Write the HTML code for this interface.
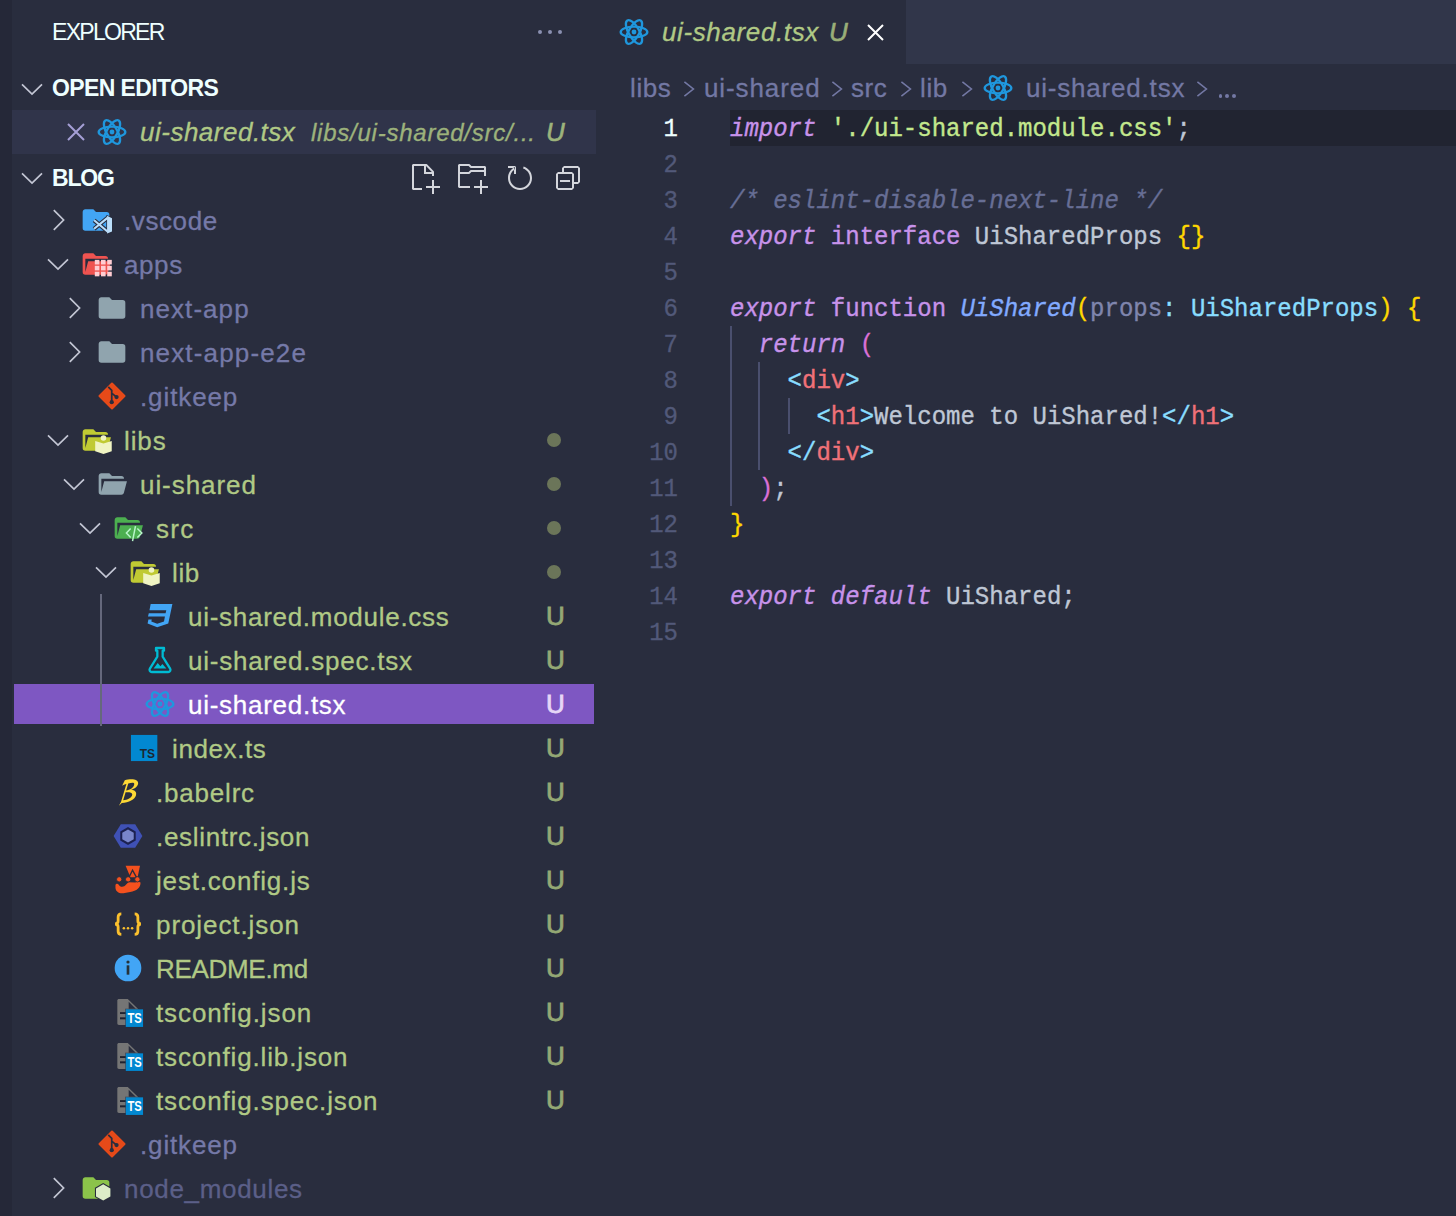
<!DOCTYPE html>
<html><head><meta charset="utf-8">
<style>
html,body{margin:0;padding:0;background:#292D3E;}
body{width:1456px;height:1216px;overflow:hidden;position:relative;background:#292D3E;font-family:"Liberation Sans",sans-serif;}
.ic{position:absolute;overflow:visible;}
.t{position:absolute;height:44px;line-height:44px;font-size:26px;white-space:pre;letter-spacing:0.6px;-webkit-text-stroke:0.3px currentColor;}
.u{position:absolute;height:44px;line-height:44px;font-size:26px;font-weight:normal;-webkit-text-stroke:0.8px currentColor;}
.ln{position:absolute;left:600px;width:78px;text-align:right;height:36px;line-height:36px;font-family:"Liberation Mono",monospace;font-size:24px;color:#525979;transform:scaleY(1.08);transform-origin:0 0;-webkit-text-stroke:0.3px currentColor;}
.ln.act{color:#eeffff;}
.cl{position:absolute;left:730px;height:36px;line-height:36px;font-family:"Liberation Mono",monospace;font-size:24px;white-space:pre;color:#bfc7d5;transform:scaleY(1.08);transform-origin:0 0;-webkit-text-stroke:0.35px currentColor;}
.i{font-style:italic;}
.kw{color:#c792ea;}
.str{color:#c3e88d;}
.pl{color:#bfc7d5;}
.cm{color:#676e95;font-style:italic;}
.fn{color:#82aaff;font-style:italic;}
.prm{color:#7f85ad;}
.op{color:#89ddff;}
.ty{color:#89ddff;}
.tag{color:#f07178;}
.b1{color:#ffd700;}
.b2{color:#da70d6;}
</style></head><body>
<div style="position:absolute;left:0;top:0;width:12px;height:1216px;background:#252838"></div>
<div style="position:absolute;left:52px;top:10px;height:44px;line-height:44px;font-size:23px;color:#eeffff;letter-spacing:-1.7px">EXPLORER</div>
<div style="position:absolute;left:538px;top:30px;width:4px;height:4px;border-radius:2px;background:#8a8fb0"></div>
<div style="position:absolute;left:548px;top:30px;width:4px;height:4px;border-radius:2px;background:#8a8fb0"></div>
<div style="position:absolute;left:558px;top:30px;width:4px;height:4px;border-radius:2px;background:#8a8fb0"></div>
<svg class="ic" style="left:21px;top:82px" width="22" height="14" viewBox="0 0 22 14"><path d="M1 2.4 L11 12 L21 2.4" fill="none" stroke="#c3c6d4" stroke-width="1.7"/></svg>
<div style="position:absolute;left:52px;top:66px;height:44px;line-height:44px;font-size:23px;font-weight:bold;color:#eeffff;letter-spacing:-0.6px">OPEN EDITORS</div>
<div style="position:absolute;left:14px;top:684px;width:580px;height:40px;background:#7e57c2"></div>
<div style="position:absolute;left:12px;top:110px;width:584px;height:44px;background:#30344a"></div>
<div style="position:absolute;left:100px;top:594px;width:2px;height:132px;background:#65687c"></div>
<svg class="ic" style="left:52px;top:209px" width="14" height="22" viewBox="0 0 14 22"><path d="M1.8 1.2 L11.6 11 L1.8 20.8" fill="none" stroke="#c3c6d4" stroke-width="1.7"/></svg>
<svg class="ic" style="left:80px;top:204px" width="32" height="32" viewBox="0 0 24 24"><path d="M10 4H4c-1.11 0-2 .89-2 2v12a2 2 0 0 0 2 2h16a2 2 0 0 0 2-2V8a2 2 0 0 0-2-2h-8l-2-2z" fill="#42a5f5"/><g stroke="#292D3E" stroke-width="1.2" stroke-linejoin="round"><path d="M10.6 12.2 L20.6 20.6 M10.6 18.6 L20.6 10.4" stroke-width="3.2"/><path d="M20.3 8.9 L24 10.6 V20.6 L20.3 22.2 Z" fill="#292D3E"/></g><path d="M10.6 12.2 L20.6 20.6 M10.6 18.6 L20.6 10.4" stroke="#bbdefb" stroke-width="1.6" fill="none"/><path d="M20.3 8.9 L24 10.6 V20.6 L20.3 22.2 Z" fill="#bbdefb"/></svg>
<div class="t" style="left:124px;top:199px;color:#7579a8;letter-spacing:0.60px">.vscode</div>
<svg class="ic" style="left:47px;top:257px" width="22" height="14" viewBox="0 0 22 14"><path d="M1 2.4 L11 12 L21 2.4" fill="none" stroke="#c3c6d4" stroke-width="1.7"/></svg>
<svg class="ic" style="left:80px;top:248px" width="32" height="32" viewBox="0 0 24 24"><path d="M19 20H4a2 2 0 0 1-2-2V6c0-1.11.89-2 2-2h6l2 2h7a2 2 0 0 1 2 2H4v10l2.14-8h17.07l-2.28 8.5c-.23.87-1.01 1.5-1.93 1.5z" fill="#ef5350"/><rect x="11.10" y="8.90" width="3.45" height="3.45" fill="#ffcdd2"/><rect x="11.10" y="13.35" width="3.45" height="3.45" fill="#ffcdd2"/><rect x="11.10" y="17.80" width="3.45" height="3.45" fill="#ffcdd2"/><rect x="15.75" y="8.90" width="3.45" height="3.45" fill="#ffcdd2"/><rect x="15.75" y="13.35" width="3.45" height="3.45" fill="#ffcdd2"/><rect x="15.75" y="17.80" width="3.45" height="3.45" fill="#ffcdd2"/><rect x="20.40" y="8.90" width="3.45" height="3.45" fill="#ffcdd2"/><rect x="20.40" y="13.35" width="3.45" height="3.45" fill="#ffcdd2"/><rect x="20.40" y="17.80" width="3.45" height="3.45" fill="#ffcdd2"/></svg>
<div class="t" style="left:124px;top:243px;color:#7579a8;letter-spacing:0.60px">apps</div>
<svg class="ic" style="left:68px;top:297px" width="14" height="22" viewBox="0 0 14 22"><path d="M1.8 1.2 L11.6 11 L1.8 20.8" fill="none" stroke="#c3c6d4" stroke-width="1.7"/></svg>
<svg class="ic" style="left:96px;top:292px" width="32" height="32" viewBox="0 0 24 24"><path d="M10 4H4c-1.11 0-2 .89-2 2v12a2 2 0 0 0 2 2h16a2 2 0 0 0 2-2V8a2 2 0 0 0-2-2h-8l-2-2z" fill="#90a4ae"/></svg>
<div class="t" style="left:140px;top:287px;color:#7579a8;letter-spacing:1.06px">next-app</div>
<svg class="ic" style="left:68px;top:341px" width="14" height="22" viewBox="0 0 14 22"><path d="M1.8 1.2 L11.6 11 L1.8 20.8" fill="none" stroke="#c3c6d4" stroke-width="1.7"/></svg>
<svg class="ic" style="left:96px;top:336px" width="32" height="32" viewBox="0 0 24 24"><path d="M10 4H4c-1.11 0-2 .89-2 2v12a2 2 0 0 0 2 2h16a2 2 0 0 0 2-2V8a2 2 0 0 0-2-2h-8l-2-2z" fill="#90a4ae"/></svg>
<div class="t" style="left:140px;top:331px;color:#7579a8;letter-spacing:1.15px">next-app-e2e</div>
<svg class="ic" style="left:96px;top:380px" width="32" height="32" viewBox="0 0 24 24"><path d="M2.6 12 L12 2.6 L21.4 12 L12 21.4 Z" fill="#e64a19" stroke="#e64a19" stroke-width="1.5" stroke-linejoin="round"/><path d="M9.2 5.2 L11.8 7.8 V16.2 M11.8 9.8 L15.2 12.6" stroke="#292D3E" stroke-width="1.3" fill="none"/><circle cx="11.8" cy="16.6" r="1.6" fill="#292D3E"/><circle cx="15.4" cy="12.8" r="1.6" fill="#292D3E"/></svg>
<div class="t" style="left:140px;top:375px;color:#7579a8;letter-spacing:0.89px">.gitkeep</div>
<svg class="ic" style="left:47px;top:433px" width="22" height="14" viewBox="0 0 22 14"><path d="M1 2.4 L11 12 L21 2.4" fill="none" stroke="#c3c6d4" stroke-width="1.7"/></svg>
<svg class="ic" style="left:80px;top:424px" width="32" height="32" viewBox="0 0 24 24"><path d="M19 20H4a2 2 0 0 1-2-2V6c0-1.11.89-2 2-2h6l2 2h7a2 2 0 0 1 2 2H4v10l2.14-8h17.07l-2.28 8.5c-.23.87-1.01 1.5-1.93 1.5z" fill="#c0ca33"/><path d="M11.4 12.7 L17.6 14.6 L23.8 12.7 V20.4 L17.6 22.5 L11.4 20.4 Z" fill="#f0f4c3"/><circle cx="17.6" cy="10.5" r="2.1" fill="#f0f4c3"/></svg>
<div class="t" style="left:124px;top:419px;color:#b0c985;letter-spacing:0.90px">libs</div>
<div style="position:absolute;left:547px;top:433px;width:14px;height:14px;border-radius:7px;background:#6b7559"></div>
<svg class="ic" style="left:63px;top:477px" width="22" height="14" viewBox="0 0 22 14"><path d="M1 2.4 L11 12 L21 2.4" fill="none" stroke="#c3c6d4" stroke-width="1.7"/></svg>
<svg class="ic" style="left:96px;top:468px" width="32" height="32" viewBox="0 0 24 24"><path d="M19 20H4a2 2 0 0 1-2-2V6c0-1.11.89-2 2-2h6l2 2h7a2 2 0 0 1 2 2H4v10l2.14-8h17.07l-2.28 8.5c-.23.87-1.01 1.5-1.93 1.5z" fill="#90a4ae"/></svg>
<div class="t" style="left:140px;top:463px;color:#b0c985;letter-spacing:0.94px">ui-shared</div>
<div style="position:absolute;left:547px;top:477px;width:14px;height:14px;border-radius:7px;background:#6b7559"></div>
<svg class="ic" style="left:79px;top:521px" width="22" height="14" viewBox="0 0 22 14"><path d="M1 2.4 L11 12 L21 2.4" fill="none" stroke="#c3c6d4" stroke-width="1.7"/></svg>
<svg class="ic" style="left:112px;top:512px" width="32" height="32" viewBox="0 0 24 24"><path d="M19 20H4a2 2 0 0 1-2-2V6c0-1.11.89-2 2-2h6l2 2h7a2 2 0 0 1 2 2H4v10l2.14-8h17.07l-2.28 8.5c-.23.87-1.01 1.5-1.93 1.5z" fill="#4caf50"/><path d="M14 12.4 L10.8 15.8 L14 19.2 M19 12.4 L22.4 15.8 L19 19.2 M17.6 10.6 L15.4 21.8" fill="none" stroke="#b9f6ca" stroke-width="1.1"/></svg>
<div class="t" style="left:156px;top:507px;color:#b0c985;letter-spacing:1.25px">src</div>
<div style="position:absolute;left:547px;top:521px;width:14px;height:14px;border-radius:7px;background:#6b7559"></div>
<svg class="ic" style="left:95px;top:565px" width="22" height="14" viewBox="0 0 22 14"><path d="M1 2.4 L11 12 L21 2.4" fill="none" stroke="#c3c6d4" stroke-width="1.7"/></svg>
<svg class="ic" style="left:128px;top:556px" width="32" height="32" viewBox="0 0 24 24"><path d="M19 20H4a2 2 0 0 1-2-2V6c0-1.11.89-2 2-2h6l2 2h7a2 2 0 0 1 2 2H4v10l2.14-8h17.07l-2.28 8.5c-.23.87-1.01 1.5-1.93 1.5z" fill="#c0ca33"/><path d="M11.4 12.7 L17.6 14.6 L23.8 12.7 V20.4 L17.6 22.5 L11.4 20.4 Z" fill="#f0f4c3"/><circle cx="17.6" cy="10.5" r="2.1" fill="#f0f4c3"/></svg>
<div class="t" style="left:172px;top:551px;color:#b0c985;letter-spacing:0.60px">lib</div>
<div style="position:absolute;left:547px;top:565px;width:14px;height:14px;border-radius:7px;background:#6b7559"></div>
<svg class="ic" style="left:144px;top:600px" width="32" height="32" viewBox="0 0 24 24"><path d="M5 3 L4.1 7.6 H16.7 L16.2 10 H3.6 L3 12.4 H15.7 L15 16.1 L9.9 17.8 L5.5 16.1 L5.8 14.6 H3.3 L2.7 17.6 L9.9 20.4 L18.2 17.6 L21.3 3 Z" fill="#42a5f5"/></svg>
<div class="t" style="left:188px;top:595px;color:#b0c985;letter-spacing:0.72px">ui-shared.module.css</div>
<div class="u" style="left:546px;top:594px;color:#94a874">U</div>
<svg class="ic" style="left:144px;top:644px" width="32" height="32" viewBox="0 0 24 24"><path d="M9 3 H15 V5 H14 V9.5 L19.6 18.5 C20.3 19.7 19.5 21 18.1 21 H5.9 C4.5 21 3.7 19.7 4.4 18.5 L10 9.5 V5 H9 Z" fill="none" stroke="#00bcd4" stroke-width="1.7" stroke-linejoin="round"/><path d="M7.2 18.4 L10.3 14.2 L12.3 16.6 L13.8 15 L16.8 18.4 Z" fill="#00bcd4"/></svg>
<div class="t" style="left:188px;top:639px;color:#b0c985;letter-spacing:0.76px">ui-shared.spec.tsx</div>
<div class="u" style="left:546px;top:638px;color:#94a874">U</div>
<svg class="ic" style="left:144px;top:688px" width="32" height="32" viewBox="0 0 24 24"><g fill="none" stroke="#1f97dd" stroke-width="1.75"><ellipse cx="12" cy="12" rx="10" ry="4"/><ellipse cx="12" cy="12" rx="10" ry="4" transform="rotate(60 12 12)"/><ellipse cx="12" cy="12" rx="10" ry="4" transform="rotate(120 12 12)"/></g><circle cx="12" cy="12" r="1.8" fill="#1f97dd"/></svg>
<div class="t" style="left:188px;top:683px;color:#ffffff;letter-spacing:0.73px">ui-shared.tsx</div>
<div class="u" style="left:546px;top:682px;color:#e6d6f6">U</div>
<svg class="ic" style="left:128px;top:732px" width="32" height="32" viewBox="0 0 24 24"><rect x="2.2" y="2.2" width="19.8" height="19.6" fill="#0288d1"/><text x="14.6" y="19.6" font-family="Liberation Sans" font-size="9" font-weight="bold" fill="#1c2733" text-anchor="middle">TS</text></svg>
<div class="t" style="left:172px;top:727px;color:#b0c985;letter-spacing:0.61px">index.ts</div>
<div class="u" style="left:546px;top:726px;color:#94a874">U</div>
<svg class="ic" style="left:112px;top:776px" width="32" height="32" viewBox="0 0 24 24"><path d="M9.6 3.2 C13 2.2 19.8 1.6 19.6 5.6 C19.5 7.8 16.8 9.6 14.2 10.4 C17.4 10.6 18.6 12.2 18 14.4 C17.2 17.6 12.6 19.8 7.4 20.2 L5.2 22.4 L6.8 19.4 L10.8 6 C9.6 6.2 8.4 6.8 7.6 7.4 Z M12.2 5.6 L10.6 10.9 C13.4 10.4 16.6 8.8 16.7 6 C16.8 4.6 14.4 5 12.2 5.6 Z M10.2 12.2 L8.4 18.2 C11.4 17.8 15 16.4 15.2 13.8 C15.3 12.2 12.6 12 10.2 12.2 Z" fill="#fdd835" fill-rule="evenodd"/></svg>
<div class="t" style="left:156px;top:771px;color:#b0c985;letter-spacing:0.80px">.babelrc</div>
<div class="u" style="left:546px;top:770px;color:#94a874">U</div>
<svg class="ic" style="left:112px;top:820px" width="32" height="32" viewBox="0 0 24 24"><path d="M6.6 3.2 H17.4 L22.8 12 L17.4 20.8 H6.6 L1.2 12 Z" fill="#3f51b5"/><path d="M12 5.3 L17.8 8.65 V15.35 L12 18.7 L6.2 15.35 V8.65 Z" fill="#1c2150"/><path d="M12 7.1 L16.3 9.55 V14.45 L12 16.9 L7.7 14.45 V9.55 Z" fill="#7986cb"/></svg>
<div class="t" style="left:156px;top:815px;color:#b0c985;letter-spacing:0.69px">.eslintrc.json</div>
<div class="u" style="left:546px;top:814px;color:#94a874">U</div>
<svg class="ic" style="left:112px;top:864px" width="32" height="32" viewBox="0 0 24 24"><path d="M10.2 1.4 H21 L19.2 10 H13.8 Z" fill="#f4511e"/><path d="M12.1 11.2 L15.4 4.6 L19 11.2" fill="none" stroke="#292D3E" stroke-width="1"/><path d="M2.6 15.6 C3 14.6 4.3 14.4 4.9 15.3 C6.2 17.6 8.8 17.6 10.6 15.4 L12.3 13.6 L17.6 13.8 L19.2 13 L21.4 13.8 C21.6 17.6 18.4 20.2 13.6 21 L8.6 21.9 C5.2 22.3 2.8 20.6 2.6 18 Z" fill="#f4511e"/><circle cx="5.4" cy="11.5" r="2" fill="#f4511e" stroke="#292D3E" stroke-width="0.7"/><circle cx="12.1" cy="11.5" r="2" fill="#f4511e" stroke="#292D3E" stroke-width="0.7"/><circle cx="19.05" cy="11.5" r="2" fill="#f4511e" stroke="#292D3E" stroke-width="0.7"/></svg>
<div class="t" style="left:156px;top:859px;color:#b0c985;letter-spacing:0.82px">jest.config.js</div>
<div class="u" style="left:546px;top:858px;color:#94a874">U</div>
<svg class="ic" style="left:112px;top:908px" width="32" height="32" viewBox="0 0 24 24"><path d="M7 4.4 C5.2 4.4 4.6 5.2 4.6 6.8 V9.8 C4.6 11 4 11.8 2.4 12 C4 12.2 4.6 13 4.6 14.2 V17.4 C4.6 19 5.2 19.8 7 19.8 M17 4.4 C18.8 4.4 19.4 5.2 19.4 6.8 V9.8 C19.4 11 20 11.8 21.6 12 C20 12.2 19.4 13 19.4 14.2 V17.4 C19.4 19 18.8 19.8 17 19.8" fill="none" stroke="#fbc02d" stroke-width="2.1"/><circle cx="8.9" cy="15.2" r="0.95" fill="#fbc02d"/><circle cx="12" cy="15.2" r="0.95" fill="#fbc02d"/><circle cx="15.1" cy="15.2" r="0.95" fill="#fbc02d"/></svg>
<div class="t" style="left:156px;top:903px;color:#b0c985;letter-spacing:0.92px">project.json</div>
<div class="u" style="left:546px;top:902px;color:#94a874">U</div>
<svg class="ic" style="left:112px;top:952px" width="32" height="32" viewBox="0 0 24 24"><circle cx="12" cy="12" r="10" fill="#42a5f5"/><rect x="11" y="10" width="2" height="7" fill="#263238"/><circle cx="12" cy="7.5" r="1.2" fill="#263238"/></svg>
<div class="t" style="left:156px;top:947px;color:#b0c985;letter-spacing:-0.31px">README.md</div>
<div class="u" style="left:546px;top:946px;color:#94a874">U</div>
<svg class="ic" style="left:112px;top:996px" width="32" height="32" viewBox="0 0 24 24"><path d="M5.2 2.2 H11.8 L20.2 10.4 V20.4 C20.2 21.2 19.6 21.7 18.9 21.7 H5.2 C4.5 21.7 4 21.2 4 20.4 V3.4 C4 2.7 4.5 2.2 5.2 2.2 Z" fill="#757575"/><path d="M12.5 4.4 V9.6 H17.8 Z" fill="#292D3E"/><rect x="6" y="12.1" width="5" height="1.4" fill="#1f2230"/><rect x="6" y="16" width="5" height="1.5" fill="#1f2230"/><rect x="9.8" y="9.5" width="14" height="14" fill="#292D3E" opacity="0.6"/><rect x="10.35" y="10" width="12.95" height="13.2" fill="#0288d1"/><text transform="translate(16.9 20.6) scale(1 1.25)" x="0" y="0" font-family="Liberation Sans" font-size="8.4" font-weight="bold" fill="#ffffff" text-anchor="middle">TS</text></svg>
<div class="t" style="left:156px;top:991px;color:#b0c985;letter-spacing:0.89px">tsconfig.json</div>
<div class="u" style="left:546px;top:990px;color:#94a874">U</div>
<svg class="ic" style="left:112px;top:1040px" width="32" height="32" viewBox="0 0 24 24"><path d="M5.2 2.2 H11.8 L20.2 10.4 V20.4 C20.2 21.2 19.6 21.7 18.9 21.7 H5.2 C4.5 21.7 4 21.2 4 20.4 V3.4 C4 2.7 4.5 2.2 5.2 2.2 Z" fill="#757575"/><path d="M12.5 4.4 V9.6 H17.8 Z" fill="#292D3E"/><rect x="6" y="12.1" width="5" height="1.4" fill="#1f2230"/><rect x="6" y="16" width="5" height="1.5" fill="#1f2230"/><rect x="9.8" y="9.5" width="14" height="14" fill="#292D3E" opacity="0.6"/><rect x="10.35" y="10" width="12.95" height="13.2" fill="#0288d1"/><text transform="translate(16.9 20.6) scale(1 1.25)" x="0" y="0" font-family="Liberation Sans" font-size="8.4" font-weight="bold" fill="#ffffff" text-anchor="middle">TS</text></svg>
<div class="t" style="left:156px;top:1035px;color:#b0c985;letter-spacing:0.86px">tsconfig.lib.json</div>
<div class="u" style="left:546px;top:1034px;color:#94a874">U</div>
<svg class="ic" style="left:112px;top:1084px" width="32" height="32" viewBox="0 0 24 24"><path d="M5.2 2.2 H11.8 L20.2 10.4 V20.4 C20.2 21.2 19.6 21.7 18.9 21.7 H5.2 C4.5 21.7 4 21.2 4 20.4 V3.4 C4 2.7 4.5 2.2 5.2 2.2 Z" fill="#757575"/><path d="M12.5 4.4 V9.6 H17.8 Z" fill="#292D3E"/><rect x="6" y="12.1" width="5" height="1.4" fill="#1f2230"/><rect x="6" y="16" width="5" height="1.5" fill="#1f2230"/><rect x="9.8" y="9.5" width="14" height="14" fill="#292D3E" opacity="0.6"/><rect x="10.35" y="10" width="12.95" height="13.2" fill="#0288d1"/><text transform="translate(16.9 20.6) scale(1 1.25)" x="0" y="0" font-family="Liberation Sans" font-size="8.4" font-weight="bold" fill="#ffffff" text-anchor="middle">TS</text></svg>
<div class="t" style="left:156px;top:1079px;color:#b0c985;letter-spacing:0.87px">tsconfig.spec.json</div>
<div class="u" style="left:546px;top:1078px;color:#94a874">U</div>
<svg class="ic" style="left:96px;top:1128px" width="32" height="32" viewBox="0 0 24 24"><path d="M2.6 12 L12 2.6 L21.4 12 L12 21.4 Z" fill="#e64a19" stroke="#e64a19" stroke-width="1.5" stroke-linejoin="round"/><path d="M9.2 5.2 L11.8 7.8 V16.2 M11.8 9.8 L15.2 12.6" stroke="#292D3E" stroke-width="1.3" fill="none"/><circle cx="11.8" cy="16.6" r="1.6" fill="#292D3E"/><circle cx="15.4" cy="12.8" r="1.6" fill="#292D3E"/></svg>
<div class="t" style="left:140px;top:1123px;color:#7579a8;letter-spacing:0.86px">.gitkeep</div>
<svg class="ic" style="left:52px;top:1177px" width="14" height="22" viewBox="0 0 14 22"><path d="M1.8 1.2 L11.6 11 L1.8 20.8" fill="none" stroke="#c3c6d4" stroke-width="1.7"/></svg>
<svg class="ic" style="left:80px;top:1172px" width="32" height="32" viewBox="0 0 24 24"><path d="M10 4H4c-1.11 0-2 .89-2 2v12a2 2 0 0 0 2 2h16a2 2 0 0 0 2-2V8a2 2 0 0 0-2-2h-8l-2-2z" fill="#8bc34a"/><path d="M17.4 8.2 L23.6 11.8 V18.8 L17.4 22.4 L11.2 18.8 V11.8 Z" fill="#292D3E"/><path d="M17.4 9.2 L22.8 12.3 V18.3 L17.4 21.4 L12 18.3 V12.3 Z" fill="#dcedc8"/></svg>
<div class="t" style="left:124px;top:1167px;color:#5b5f88;letter-spacing:0.68px">node_modules</div>
<svg class="ic" style="left:21px;top:171px" width="22" height="14" viewBox="0 0 22 14"><path d="M1 2.4 L11 12 L21 2.4" fill="none" stroke="#c3c6d4" stroke-width="1.7"/></svg>
<div style="position:absolute;left:52px;top:156px;height:44px;line-height:44px;font-size:23px;font-weight:bold;color:#eeffff;letter-spacing:-1.2px">BLOG</div>
<!-- editor -->
<div style="position:absolute;left:906px;top:0;width:550px;height:64px;background:#31364a"></div>
<div style="position:absolute;left:730px;top:110px;width:726px;height:36px;background:#212431"></div>
<div class="ln act" style="top:110px">1</div>
<div class="cl" style="top:110px"><span class="kw i">import</span> <span class="str">'./ui-shared.module.css'</span><span class="pl">;</span></div>
<div class="ln" style="top:146px">2</div>
<div class="cl" style="top:146px"></div>
<div class="ln" style="top:182px">3</div>
<div class="cl" style="top:182px"><span class="cm">/* eslint-disable-next-line */</span></div>
<div class="ln" style="top:218px">4</div>
<div class="cl" style="top:218px"><span class="kw i">export</span> <span class="kw">interface</span> <span class="pl">UiSharedProps</span> <span class="b1">{}</span></div>
<div class="ln" style="top:254px">5</div>
<div class="cl" style="top:254px"></div>
<div class="ln" style="top:290px">6</div>
<div class="cl" style="top:290px"><span class="kw i">export</span> <span class="kw">function</span> <span class="fn">UiShared</span><span class="b1">(</span><span class="prm">props</span><span class="op">:</span> <span class="ty">UiSharedProps</span><span class="b1">)</span> <span class="b1">{</span></div>
<div class="ln" style="top:326px">7</div>
<div class="cl" style="top:326px">  <span class="kw i">return</span> <span class="b2">(</span></div>
<div class="ln" style="top:362px">8</div>
<div class="cl" style="top:362px">    <span class="op">&lt;</span><span class="tag">div</span><span class="op">&gt;</span></div>
<div class="ln" style="top:398px">9</div>
<div class="cl" style="top:398px">      <span class="op">&lt;</span><span class="tag">h1</span><span class="op">&gt;</span><span class="pl">Welcome to UiShared!</span><span class="op">&lt;/</span><span class="tag">h1</span><span class="op">&gt;</span></div>
<div class="ln" style="top:434px">10</div>
<div class="cl" style="top:434px">    <span class="op">&lt;/</span><span class="tag">div</span><span class="op">&gt;</span></div>
<div class="ln" style="top:470px">11</div>
<div class="cl" style="top:470px">  <span class="b2">)</span><span class="pl">;</span></div>
<div class="ln" style="top:506px">12</div>
<div class="cl" style="top:506px"><span class="b1">}</span></div>
<div class="ln" style="top:542px">13</div>
<div class="cl" style="top:542px"></div>
<div class="ln" style="top:578px">14</div>
<div class="cl" style="top:578px"><span class="kw i">export</span> <span class="kw i">default</span> <span class="pl">UiShared</span><span class="pl">;</span></div>
<div class="ln" style="top:614px">15</div>
<div class="cl" style="top:614px"></div>
<svg class="ic" style="left:408px;top:162px" width="32" height="32" viewBox="0 0 16 16"><path d="M9.5 1.1l3.4 3.5.1.4v2h-1V6H8V2H3v11h4v1H2.5l-.5-.5v-12l.5-.5h6.7l.3.1zM9 2v3h2.9L9 2zm4 14h-1v-3H9v-1h3V9h1v3h3v1h-3v3z" fill="#d4d6dc" fill-rule="evenodd" clip-rule="evenodd"/></svg>
<svg class="ic" style="left:456px;top:162px" width="32" height="32" viewBox="0 0 16 16"><path d="M14.5 2H7.71l-.85-.85L6.51 1h-5l-.5.5v11l.5.5H7v-1H1.99V6h4.49l.35-.15.86-.86H14v1.5l-.001.51h1.011V2.5L14.5 2zm-.51 2h-6.5l-.35.15-.86.86H2v-3h4.29l.85.85.36.15H14l-.01.99zM13 16h-1v-3H9v-1h3V9h1v3h3v1h-3v3z" fill="#d4d6dc" fill-rule="evenodd" clip-rule="evenodd"/></svg>
<svg class="ic" style="left:504px;top:162px" width="32" height="32" viewBox="0 0 16 16"><path d="M5.56253 2.51577C3.46348 3.4501 2 5.55414 2 7.99999C2 11.3137 4.68629 14 8 14C11.3137 14 14 11.3137 14 7.99999C14 5.32519 12.2497 3.05919 9.83199 2.28482L9.52968 3.23832C11.5429 3.88454 13 5.7721 13 7.99999C13 10.7614 10.7614 13 8 13C5.23858 13 3 10.7614 3 7.99999C3 6.31104 3.83742 4.81767 5.11969 3.91245L5.56253 2.51577ZM5 3H2V2H5.5L6 2.5V6H5V3Z" fill="#d4d6dc" fill-rule="evenodd" clip-rule="evenodd"/></svg>
<svg class="ic" style="left:552px;top:162px" width="32" height="32" viewBox="0 0 16 16"><path d="M9 9H4v1h5V9zM5 3l1-1h7l1 1v7l-1 1h-2v2l-1 1H3l-1-1V6l1-1h2V3zm1 2h4l1 1v4h2V3H6v2zm4 1H3v7h7V6z" fill="#d4d6dc" fill-rule="evenodd" clip-rule="evenodd"/></svg>
<svg class="ic" style="left:67px;top:123px" width="18" height="18" viewBox="0 0 18 18"><path d="M1 1 L17 17 M17 1 L1 17" stroke="#a59fd6" stroke-width="2" fill="none"/></svg>
<svg class="ic" style="left:96px;top:116px" width="32" height="32" viewBox="0 0 24 24"><g fill="none" stroke="#1f97dd" stroke-width="1.75"><ellipse cx="12" cy="12" rx="10" ry="4"/><ellipse cx="12" cy="12" rx="10" ry="4" transform="rotate(60 12 12)"/><ellipse cx="12" cy="12" rx="10" ry="4" transform="rotate(120 12 12)"/></g><circle cx="12" cy="12" r="1.8" fill="#1f97dd"/></svg>
<div class="t" style="left:140px;top:110px;color:#b0c985;font-style:italic;letter-spacing:0.5px">ui-shared.tsx</div>
<div class="t" style="left:311px;top:111px;color:#b0c985;font-style:italic;font-size:24px;letter-spacing:0.76px;opacity:0.85">libs/ui-shared/src/...</div>
<div class="u" style="left:546px;top:110px;color:#9db37c;font-style:italic;font-weight:normal;-webkit-text-stroke:0.6px currentColor">U</div>
<svg class="ic" style="left:618px;top:16px" width="32" height="32" viewBox="0 0 24 24"><g fill="none" stroke="#1f97dd" stroke-width="1.75"><ellipse cx="12" cy="12" rx="10" ry="4"/><ellipse cx="12" cy="12" rx="10" ry="4" transform="rotate(60 12 12)"/><ellipse cx="12" cy="12" rx="10" ry="4" transform="rotate(120 12 12)"/></g><circle cx="12" cy="12" r="1.8" fill="#1f97dd"/></svg>
<div class="t" style="left:662px;top:10px;color:#b0c985;font-style:italic;letter-spacing:0.62px">ui-shared.tsx</div>
<div class="u" style="left:829px;top:10px;color:#9aae78;font-style:italic;font-weight:normal;-webkit-text-stroke:0.6px currentColor">U</div>
<svg class="ic" style="left:867px;top:24px" width="17" height="17" viewBox="0 0 17 17"><path d="M1 1 L16 16 M16 1 L1 16" stroke="#ffffff" stroke-width="2" fill="none"/></svg>
<div style="position:absolute;left:1218.6px;top:94.1px;width:3.8px;height:3.8px;border-radius:2px;background:#7378a4"></div><div style="position:absolute;left:1225.3px;top:94.1px;width:3.8px;height:3.8px;border-radius:2px;background:#7378a4"></div><div style="position:absolute;left:1232px;top:94.1px;width:3.8px;height:3.8px;border-radius:2px;background:#7378a4"></div>
<div class="t" style="left:630px;top:66px;color:#7378a4;letter-spacing:0.6px">libs</div>
<div class="t" style="left:704px;top:66px;color:#7378a4;letter-spacing:0.9px">ui-shared</div>
<div class="t" style="left:851px;top:66px;color:#7378a4;letter-spacing:0.6px">src</div>
<div class="t" style="left:920px;top:66px;color:#7378a4;letter-spacing:0.6px">lib</div>
<div class="t" style="left:1026px;top:66px;color:#7378a4;letter-spacing:0.8px">ui-shared.tsx</div>
<svg class="ic" style="left:683px;top:81px" width="12" height="16" viewBox="0 0 12 16"><path d="M1.4 0.8 L10.4 8 L1.4 15.2" stroke="#7378a4" stroke-width="1.6" fill="none"/></svg>
<svg class="ic" style="left:831px;top:81px" width="12" height="16" viewBox="0 0 12 16"><path d="M1.4 0.8 L10.4 8 L1.4 15.2" stroke="#7378a4" stroke-width="1.6" fill="none"/></svg>
<svg class="ic" style="left:900px;top:81px" width="12" height="16" viewBox="0 0 12 16"><path d="M1.4 0.8 L10.4 8 L1.4 15.2" stroke="#7378a4" stroke-width="1.6" fill="none"/></svg>
<svg class="ic" style="left:961px;top:81px" width="12" height="16" viewBox="0 0 12 16"><path d="M1.4 0.8 L10.4 8 L1.4 15.2" stroke="#7378a4" stroke-width="1.6" fill="none"/></svg>
<svg class="ic" style="left:1196px;top:81px" width="12" height="16" viewBox="0 0 12 16"><path d="M1.4 0.8 L10.4 8 L1.4 15.2" stroke="#7378a4" stroke-width="1.6" fill="none"/></svg>
<svg class="ic" style="left:982px;top:72px" width="32" height="32" viewBox="0 0 24 24"><g fill="none" stroke="#1f97dd" stroke-width="1.75"><ellipse cx="12" cy="12" rx="10" ry="4"/><ellipse cx="12" cy="12" rx="10" ry="4" transform="rotate(60 12 12)"/><ellipse cx="12" cy="12" rx="10" ry="4" transform="rotate(120 12 12)"/></g><circle cx="12" cy="12" r="1.8" fill="#1f97dd"/></svg>
<div style="position:absolute;left:730px;top:326px;width:2px;height:180px;background:#4a4f6e"></div>
<div style="position:absolute;left:758px;top:362px;width:2px;height:108px;background:#4a4f6e"></div>
<div style="position:absolute;left:788px;top:398px;width:2px;height:36px;background:#4a4f6e"></div>
</body></html>
